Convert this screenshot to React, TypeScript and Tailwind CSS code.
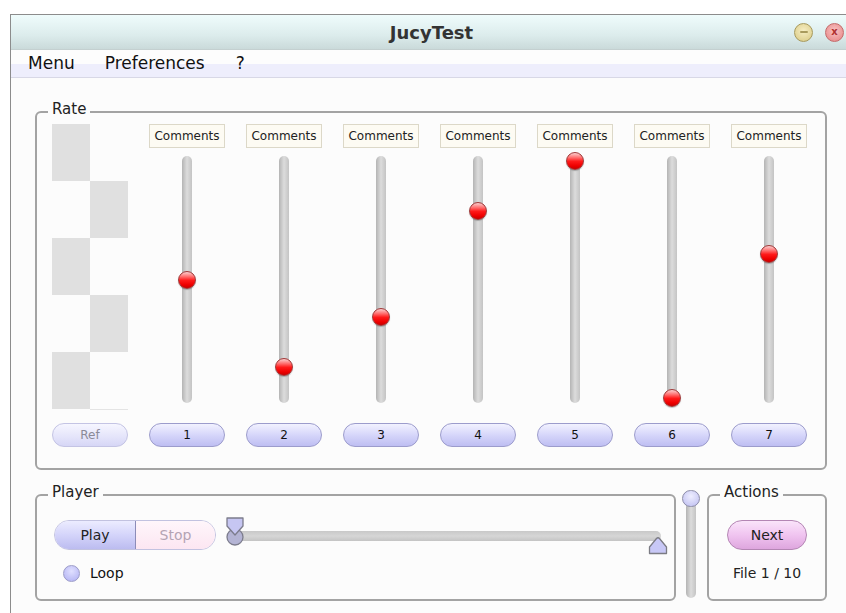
import React from "react";

const FONT = { fontFamily: '"DejaVu Sans", Verdana, sans-serif' };

function Knob({ top }: { top: number }) {
  return (
    <div
      className="absolute left-1/2 -ml-[9px] w-[18px] h-[18px] rounded-full border border-[#a03838] bg-[linear-gradient(to_bottom,#fbd0d0_0%,#ff6a6a_30%,#ff1a1a_52%,#ee0000_80%,#c80000_100%)] shadow-[0_1px_1px_rgba(0,0,0,0.25)]"
      style={{ top }}
    />
  );
}

function Group({ label, className, children }: { label: string; className: string; children?: React.ReactNode }) {
  return (
    <div className={`relative border-2 border-[#a3a3a3] rounded-[6px] ${className}`}>
      <span className="absolute left-[11px] top-[-13px] px-[4px] bg-[#fcfcfc] text-[15px] leading-[18px] text-[#222]">
        {label}
      </span>
      {children}
    </div>
  );
}

export default function App() {
  const knobTops = [123, 210, 160, 54, 4, 241, 97];
  return (
    <div className="w-[846px] h-[613px] bg-white overflow-hidden pt-[14px] pl-[10px]" style={FONT}>
      <div className="h-[599px] border-l border-t border-[#8c8c8c] bg-[#fcfcfc] flex flex-col">
        {/* Title bar */}
        <div className="h-[35px] grid grid-cols-[1fr_auto_1fr] items-center bg-[linear-gradient(to_bottom,#effcfc,#dcecec_60%,#cadada)] border-b border-[#c4d0d0]">
          <div />
          <div className="text-[18px] font-bold text-[#333] pl-[6px]">JucyTest</div>
          <div className="flex justify-end items-center gap-[12px] pr-[2px]">
            <div className="w-[19px] h-[19px] rounded-full border border-[#a89a5c] bg-[radial-gradient(circle_at_50%_40%,#f6eec4,#d8c880)] flex items-center justify-center">
              <div className="w-[8px] h-[2px] bg-[#a89a5c] rounded" />
            </div>
            <div className="w-[19px] h-[19px] rounded-full border border-[#c46a6a] bg-[radial-gradient(circle_at_50%_40%,#f8c4c4,#e68080)] flex items-center justify-center text-[10px] leading-none font-bold text-[#b03030]">
              x
            </div>
          </div>
        </div>
        {/* Menu bar */}
        <div className="h-[28px] flex items-center pl-[17px] text-[17px] text-[#111] bg-[linear-gradient(to_bottom,#fdfdfd_0%,#fdfdfd_52%,#eeeefc_52%,#eeeefc_100%)] border-b border-[#d8d8e6]">
          <span>Menu</span>
          <span className="ml-[30px]">Preferences</span>
          <span className="ml-[31px]">?</span>
        </div>
        {/* Content */}
        <div className="flex-1 pl-[24px] pt-[33px]">
          <Group label="Rate" className="w-[792px] h-[359px]">
            <div className="flex gap-[21px] pl-[15px] pt-[11px]">
              {/* Reference column */}
              <div className="w-[76px] flex flex-col">
                <div className="h-[299px] flex flex-col">
                  {[0, 1, 2, 3, 4].map((i) => (
                    <div key={i} className="h-[57px] flex">
                      <div className={`w-[38px] ${i % 2 === 0 ? "bg-[#e0e0e0]" : ""}`} />
                      <div className={`w-[38px] ${i % 2 === 1 ? "bg-[#e0e0e0]" : ""}`} />
                    </div>
                  ))}
                  <div className="flex">
                    <div className="w-[38px]" />
                    <div className="w-[38px] h-[1px] bg-[#e4e4e4]" />
                  </div>
                </div>
                <div className="h-[24px] rounded-full border border-[#c4c4e4] bg-[linear-gradient(to_bottom,#f6f6ff,#e4e4fa_60%,#d6d6f6)] flex items-center justify-center text-[12px] text-[#8a8a98]">
                  Ref
                </div>
              </div>
              {knobTops.map((t, i) => (
                <div key={i} className="w-[76px] flex flex-col">
                  <div className="h-[24px] border border-[#dcd8c8] bg-[#fdfbf3] flex items-center justify-center text-[12px] text-[#222]">
                    Comments
                  </div>
                  <div className="h-[275px] relative">
                    <div className="mx-auto mt-[8px] w-[10px] h-[247px] rounded-full bg-[linear-gradient(to_right,#b4b4b4,#dcdcdc_50%,#c4c4c4)]" />
                    <Knob top={t} />
                  </div>
                  <div className="h-[24px] rounded-full border border-[#9c9ccc] bg-[linear-gradient(to_bottom,#f2f2ff,#d6d6fa_50%,#bebef2)] flex items-center justify-center text-[12px] text-[#111]">
                    {i + 1}
                  </div>
                </div>
              ))}
            </div>
          </Group>

          {/* Bottom row */}
          <div className="flex items-start mt-[24px]">
            <Group label="Player" className="w-[641px] h-[107px]">
              <div className="pl-[17px] pt-[24px] flex items-start">
                <div className="flex h-[30px] w-[162px] rounded-full overflow-hidden border border-[#c2c2e0]">
                  <div className="w-[81px] bg-[linear-gradient(to_bottom,#ececff,#d4d4fa_50%,#bcbcf0)] border-r border-[#8c8cb8] flex items-center justify-center text-[14px] text-[#222]">
                    Play
                  </div>
                  <div className="flex-1 bg-[linear-gradient(to_bottom,#fff6fb,#fce6f2)] flex items-center justify-center text-[14px] text-[#b4a4b4]">
                    Stop
                  </div>
                </div>
                <div className="relative ml-[9px] -mt-[3px] w-[442px] h-[38px]">
                  <div className="absolute left-[16px] top-[14px] w-[420px] h-[10px] rounded-r-full bg-[linear-gradient(to_bottom,#c8c8c8,#d6d6d6_50%,#c4c4c4)]" />
                  <svg className="absolute left-0 top-0" width="20" height="30" viewBox="0 0 20 30">
                    <circle cx="10" cy="20" r="8" fill="#b4b4d4" stroke="#7c7c8c" strokeWidth="1.3" />
                    <path d="M2 1 H18 V9 L10 18 L2 9 Z" fill="#c6c6f2" stroke="#7c7c8c" strokeWidth="1.3" strokeLinejoin="round" />
                  </svg>
                  <svg className="absolute left-[423px] top-[19px]" width="20" height="19" viewBox="0 0 20 19">
                    <path d="M1.5 17.5 V11 L8.5 2.5 Q10 1 11.5 2.5 L18.5 11 V17.5 Z" fill="#c8c8f6" stroke="#7c7c84" strokeWidth="1.3" strokeLinejoin="round" />
                  </svg>
                </div>
              </div>
              <div className="flex items-center pl-[26px] mt-[8px]">
                <div className="w-[17px] h-[17px] rounded-full border border-[#9c9cc8] bg-[radial-gradient(circle_at_50%_35%,#e0e0ff,#aeaef2)]" />
                <span className="ml-[10px] text-[14px] text-[#111]">Loop</span>
              </div>
            </Group>

            <div className="ml-[6px] -mt-[4px] w-[18px] h-[109px] relative">
              <div className="absolute left-[4px] top-[12px] w-[10px] h-[96px] rounded-full bg-[linear-gradient(to_right,#b4b4b4,#dcdcdc_50%,#c4c4c4)]" />
              <div className="absolute left-0 top-0 w-[18px] h-[17px] rounded-full border border-[#8c8ca8] bg-[radial-gradient(circle_at_50%_35%,#eeeeff,#bcbcf0)]" />
            </div>

            <Group label="Actions" className="ml-[7px] w-[120px] h-[107px]">
              <div className="flex flex-col items-center pt-[24px]">
                <div className="w-[80px] h-[30px] rounded-full border border-[#b486b4] bg-[linear-gradient(to_bottom,#fae4fa,#f0c4f0_50%,#dea6de)] flex items-center justify-center text-[14px] text-[#222]">
                  Next
                </div>
                <div className="mt-[13px] text-[14px] text-[#222]">File 1 / 10</div>
              </div>
            </Group>
          </div>
        </div>
      </div>
    </div>
  );
}
